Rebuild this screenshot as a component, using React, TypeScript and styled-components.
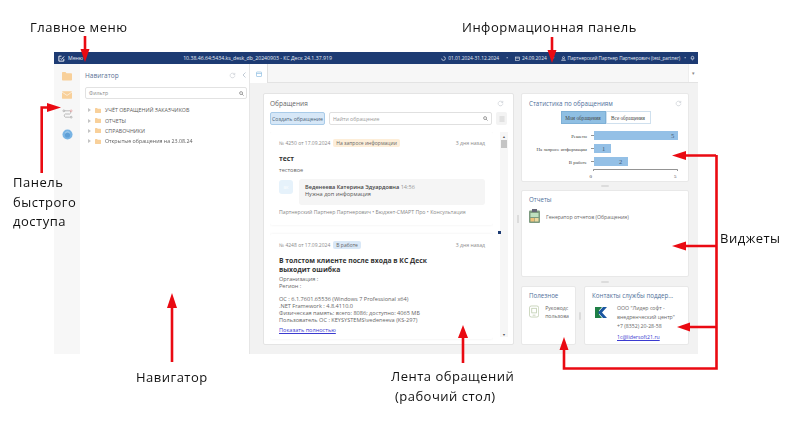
import React from "react";
import styled, { createGlobalStyle } from "styled-components";

const Global = createGlobalStyle`
  html, body { margin: 0; padding: 0; background: #fff; }
  body { font-family: "Open Sans", "Noto Sans", sans-serif; }
  #root { width: 789px; height: 422px; overflow: hidden; position: relative; }
`;

const Page = styled.div`
  width: 789px;
  height: 422px;
  padding: 52px 91px 0 54px;
  box-sizing: border-box;
  background: #fff;
`;
const AppWindow = styled.div`
  width: 644px;
  height: 302px;
  display: flex;
  flex-direction: column;
  filter: blur(0.35px);
  font-size: 6px;
  color: #555;
`;
const TopBar = styled.header`
  height: 12px;
  background: #1d3b73;
  color: #e6ecf5;
  display: flex;
  align-items: center;
  padding: 0 3px 0 4px;
  font-size: 5.2px;
  flex: none;
`;
const MenuBtn = styled.div`
  display: flex;
  align-items: center;
  gap: 3px;
  width: 107px;
  flex: none;
`;
const TopTitle = styled.div`
  width: 185px;
  flex: none;
  text-align: center;
  white-space: nowrap;
`;
const TopInfo = styled.div`
  margin-left: auto;
  display: flex;
  align-items: center;
  white-space: nowrap;
  font-size: 4.85px;
`;
const InfoItem = styled.span<{ $fs?: number }>`
  display: inline-flex;
  align-items: center;
  gap: 2px;
  ${(p) => (p.$fs ? `font-size: ${p.$fs}px;` : "")}
`;
const Dot = styled.span<{ $m: number }>`
  margin: 0 ${(p) => p.$m}px;
  opacity: 0.8;
`;
const Body = styled.div`
  flex: 1;
  display: flex;
  min-height: 0;
`;
const Rail = styled.nav`
  width: 26px;
  background: #f7f7f7;
  display: flex;
  flex-direction: column;
  align-items: center;
  padding-top: 8px;
  gap: 10px;
  flex: none;
  box-sizing: border-box;
`;
const Navigator = styled.aside`
  width: 170px;
  background: #fff;
  border-right: 1px solid #e6e6e6;
  padding: 6px 2px 0 5px;
  box-sizing: border-box;
  flex: none;
`;
const NavHead = styled.div`
  display: flex;
  align-items: center;
  justify-content: space-between;
  height: 10px;
  color: #5a7295;
  font-size: 6.5px;
  padding-right: 1px;
`;
const HeadIcons = styled.div`
  display: flex;
  gap: 6px;
  align-items: center;
`;
const Filter = styled.div`
  margin-top: 7px;
  height: 12px;
  border: 1px solid #e2e2e2;
  border-radius: 2px;
  display: flex;
  align-items: center;
  justify-content: space-between;
  padding: 0 2px 0 3px;
  font-size: 5.2px;
  color: #888;
  box-sizing: border-box;
`;
const Tree = styled.ul`
  list-style: none;
  margin: 6px 0 0;
  padding: 0 0 0 3px;
`;
const TreeRow = styled.li`
  height: 10.4px;
  display: flex;
  align-items: center;
  gap: 4px;
  font-size: 5.3px;
  color: #5c5c5c;
  white-space: nowrap;
`;
const Caret = styled.span`
  width: 0;
  height: 0;
  border-left: 3px solid #c4c4c4;
  border-top: 2px solid transparent;
  border-bottom: 2px solid transparent;
`;
const Work = styled.main`
  flex: 1;
  display: flex;
  flex-direction: column;
  min-width: 0;
`;
const TabBar = styled.div`
  height: 19px;
  flex: none;
  background: #f7f7f7;
  border-bottom: 1px solid #e3e3e3;
  display: flex;
  justify-content: space-between;
  box-sizing: border-box;
`;
const Tab = styled.div`
  width: 17px;
  background: #fff;
  border-right: 1px solid #e0e0e0;
  display: flex;
  align-items: center;
  justify-content: center;
  height: 19px;
`;
const TabMenu = styled.div`
  width: 9px;
  background: #fff;
  border-left: 1px solid #eee;
  display: flex;
  align-items: center;
  justify-content: center;
  color: #888;
  font-size: 5px;
`;
const Desk = styled.div`
  flex: 1;
  background: #f2f2f2;
  display: flex;
  padding: 10px 9px 9px 13px;
  gap: 7px;
  min-height: 0;
`;
const FeedPanel = styled.section`
  width: 251px;
  flex: none;
  background: #fff;
  border: 1px solid #e4e4e4;
  border-radius: 2px;
  padding: 4px 5px 0 6px;
  box-sizing: border-box;
  display: flex;
  flex-direction: column;
  min-height: 0;
`;
const PanelHead = styled.div`
  display: flex;
  justify-content: space-between;
  align-items: center;
  height: 10px;
  font-size: 6.5px;
  color: #666;
  padding-right: 4px;
`;
const Toolbar = styled.div`
  display: flex;
  gap: 4px;
  margin-top: 4px;
  height: 13px;
  flex: none;
`;
const CreateBtn = styled.div`
  width: 55px;
  background: #d6e7f7;
  border: 1px solid #a9cbe8;
  border-radius: 2px;
  font-size: 5.2px;
  color: #4b5f75;
  display: flex;
  align-items: center;
  justify-content: center;
  box-sizing: border-box;
  white-space: nowrap;
`;
const SearchBox = styled.div`
  width: 163px;
  border: 1px solid #e0e0e0;
  border-radius: 2px;
  font-size: 5.2px;
  color: #999;
  display: flex;
  align-items: center;
  justify-content: space-between;
  padding: 0 3px;
  box-sizing: border-box;
`;
const ListBtn = styled.div`
  width: 11px;
  background: #f3f3f3;
  border-radius: 2px;
  display: flex;
  align-items: center;
  justify-content: center;
`;
const FeedWrap = styled.div`
  flex: 1;
  display: flex;
  gap: 7px;
  min-height: 0;
  margin-top: 7px;
`;
const FeedList = styled.div`
  width: 223px;
  display: flex;
  flex-direction: column;
  gap: 9px;
  overflow: hidden;
  flex: none;
  padding-bottom: 10px;
`;
const Ticket = styled.article<{ $h: number }>`
  height: ${(p) => p.$h}px;
  background: #fff;
  box-shadow: 0 0 3px rgba(0, 0, 0, 0.07);
  border-radius: 2px;
  padding: 7px 7px 0 9px;
  box-sizing: border-box;
  flex: none;
`;
const TicketMeta = styled.div`
  display: flex;
  align-items: center;
  font-size: 5px;
  color: #8a8a8a;
  height: 8px;
  gap: 3px;
  padding-right: 1px;
`;
const Status = styled.span<{ $bg: string }>`
  background: ${(p) => p.$bg};
  color: #666;
  border-radius: 2px;
  padding: 1px 3px;
  white-space: nowrap;
`;
const Ago = styled.span`
  margin-left: auto;
  font-size: 5.2px;
`;
const TicketTitle = styled.h3<{ $mb: number }>`
  margin: 7px 0 ${(p) => p.$mb}px;
  font-size: 6.8px;
  line-height: 9px;
  font-weight: 700;
  color: #333;
  width: 150px;
`;
const TicketText = styled.div`
  font-size: 5.6px;
  color: #666;
  line-height: 7px;
`;
const Comment = styled.div`
  display: flex;
  gap: 6px;
  margin-top: 5px;
`;
const Avatar = styled.div`
  width: 14px;
  height: 14px;
  margin-top: 1px;
  border-radius: 3px;
  background: #e6f2fb;
  color: #fff;
  font-size: 4px;
  display: flex;
  align-items: center;
  justify-content: center;
  flex: none;
`;
const Bubble = styled.div`
  width: 186px;
  height: 26px;
  background: #f5f5f5;
  border-radius: 3px;
  padding: 5px 6px;
  box-sizing: border-box;
  font-size: 5.6px;
  line-height: 7px;
  color: #555;
`;
const Author = styled.b`
  color: #444;
  font-weight: 600;
`;
const Time = styled.span`
  color: #999;
`;
const TicketFoot = styled.div`
  margin-top: 3px;
  font-size: 5.2px;
  color: #888;
  white-space: nowrap;
`;
const ShowAll = styled.a`
  display: block;
  margin-top: 2px;
  font-size: 5.6px;
  color: #3b3bd0;
  text-decoration: underline;
`;
const Gap = styled.div`
  height: 6px;
`;
const Scrollbar = styled.div`
  width: 8px;
  background: #f6f6f6;
  display: flex;
  flex-direction: column;
  align-items: center;
  font-size: 3.5px;
  color: #555;
  justify-content: space-between;
  padding: 2px 0 0;
  flex: none;
  height: 205px;
  box-sizing: border-box;
`;
const Thumb = styled.div`
  width: 6px;
  height: 8px;
  background: #c4c4c4;
  margin-top: 1px;
`;
const ThumbCol = styled.div`
  display: flex;
  flex-direction: column;
  align-items: center;
`;
const Side = styled.div`
  width: 168px;
  flex: none;
  display: flex;
  flex-direction: column;
  position: relative;
`;
const Card = styled.section<{ $h?: number; $w?: number; $pt?: number }>`
  background: #fff;
  border: 1px solid #e8e8e8;
  border-radius: 2px;
  box-sizing: border-box;
  padding: ${(p) => p.$pt ?? 4}px 6px 0 7px;
  ${(p) => (p.$h ? `height: ${p.$h}px; flex: none;` : "")}
  ${(p) => (p.$w ? `width: ${p.$w}px; flex: none;` : "")}
  overflow: hidden;
`;
const CardTitle = styled.div`
  height: 10px;
  display: flex;
  align-items: center;
  justify-content: space-between;
  font-size: 6.2px;
  color: #4f6f9a;
  white-space: nowrap;
`;
const Toggle = styled.div`
  display: flex;
  justify-content: center;
  margin-top: 3px;
  height: 13px;
  font-family: "Liberation Serif", serif;
  font-size: 5.2px;
`;
const ToggleItem = styled.div<{ $on?: boolean }>`
  width: 45px;
  display: flex;
  align-items: center;
  justify-content: center;
  background: ${(p) => (p.$on ? "#8fbfe3" : "#fff")};
  border: 1px solid ${(p) => (p.$on ? "#7eb0d6" : "#cfe0ee")};
  color: #444;
  box-sizing: border-box;
  white-space: nowrap;
`;
const ChartSvg = styled.svg`
  display: block;
  margin: 5px 0 0 -7px;
`;
const Grip = styled.div<{ $h: number }>`
  height: ${(p) => p.$h}px;
  display: flex;
  align-items: center;
  justify-content: center;
  flex: none;
  &::after {
    content: "";
    width: 8px;
    height: 2px;
    background: #dcdcdc;
    border-radius: 1px;
  }
`;
const VGrip = styled.div`
  width: 8px;
  flex: none;
  display: flex;
  align-items: center;
  justify-content: center;
  &::after {
    content: "";
    width: 2px;
    height: 8px;
    background: #dcdcdc;
    border-radius: 1px;
  }
`;
const BottomRow = styled.div`
  display: flex;
  height: 59px;
  flex: none;
`;
const ItemRow = styled.div`
  display: flex;
  gap: 6px;
  margin-top: 5px;
  align-items: flex-start;
  font-size: 5.2px;
  color: #666;
  line-height: 8px;
`;
const ReportLabel = styled.span`
  margin-top: 4px;
  white-space: nowrap;
`;
const Guide = styled.span`
  margin-top: -1px;
  white-space: nowrap;
`;
const LogoRow = styled.div`
  display: flex;
  gap: 10px;
  margin-top: 4px;
  padding-left: 3px;
`;
const Contact = styled.div`
  font-size: 5.2px;
  line-height: 8.5px;
  color: #666;
  white-space: nowrap;
`;
const Phone = styled.div`
  margin-top: 1px;
`;
const Mail = styled.a`
  color: #3b3bd0;
  text-decoration: underline;
  display: block;
  margin-top: 2px;
`;
const SideSplit = styled.div`
  position: absolute;
  left: -4px;
  top: 122px;
  width: 2px;
  height: 8px;
  background: #dcdcdc;
`;
const Marker = styled.div`
  position: absolute;
  left: 498px;
  top: 231px;
  width: 3px;
  height: 3px;
  background: #1d3b73;
`;
const Callout = styled.div<{ $x: number; $y: number }>`
  position: absolute;
  left: ${(p) => p.$x}px;
  top: ${(p) => p.$y}px;
  font-family: "Open Sans", sans-serif;
  font-size: 13px;
  line-height: 19.5px;
  color: #111;
  white-space: pre;
  letter-spacing: 0.5px;
`;
const Arrows = styled.svg`
  position: absolute;
  left: 0;
  top: 0;
  pointer-events: none;
`;

const Folder = ({ s = 10, c = "#f8d09a" }: { s?: number; c?: string }) => (
  <svg width={s} height={s * 0.85} viewBox="0 0 12 10">
    <path d="M0 1.2C0 .5.5 0 1.2 0h3l1.2 1.4h5.4c.7 0 1.2.5 1.2 1.2v6.200c0 .7-.5 1.2-1.2 1.2H1.2C.5 10 0 9.5 0 8.8z" fill={c} />
  </svg>
);
const Reload = ({ c = "#ccd0d6" }: { c?: string }) => (
  <svg width="7" height="7" viewBox="0 0 24 24" fill="none" stroke={c} strokeWidth="2.4">
    <path d="M20 12a8 8 0 1 1-2.5-5.800L20 8.500M20 3v5.500h-5.500" />
  </svg>
);
const Search = () => (
  <svg width="5" height="5" viewBox="0 0 24 24" fill="none" stroke="#777" strokeWidth="3.4">
    <circle cx="10" cy="10" r="7" />
    <path d="M15 15l7 7" />
  </svg>
);

const Chart = () => (
  <ChartSvg width="168" height="50" viewBox="0 0 168 50" fontFamily="Liberation Serif, serif" fontSize="4.9" fill="#444">
    <rect x="72" y="2" width="84" height="9" fill="#94c0e6" />
    <rect x="72" y="15" width="17" height="9" fill="#94c0e6" />
    <rect x="72" y="28" width="34" height="9" fill="#94c0e6" />
    <g stroke="#666" strokeWidth="0.7" fill="none">
      <path d="M69 6.500h3M69 19.500h3M69 32.500h3" />
      <path d="M71.500 42v-1.500h84V42" />
    </g>
    <text x="65" y="8.500" textAnchor="end">Решено</text>
    <text x="65" y="21.500" textAnchor="end">На запросе информации</text>
    <text x="65" y="34.500" textAnchor="end">В работе</text>
    <text x="149" y="9" fontSize="6.5" fill="#3f5a75">5</text>
    <text x="80" y="22" fontSize="6.5" fill="#3f5a75">1</text>
    <text x="97" y="35" fontSize="6.5" fill="#3f5a75">2</text>
    <text x="67.500" y="48.500">0</text>
    <text x="152" y="48.500">5</text>
  </ChartSvg>
);

const Red = "#ea0a12";
const ArrowLayer = () => (
  <Arrows width="789" height="422" viewBox="0 0 789 422">
    <g fill="none" stroke={Red} strokeWidth="2.6">
      <path d="M85 36v16" />
      <path d="M552 37v16" />
      <path d="M41.700 173V107.500h8" />
      <path d="M172 305v57" />
      <path d="M463 335v28" />
      <path d="M716 155.500h-34M716 246h-34M716 327h-30M716.500 155v213.500H564V347" />
    </g>
    <g fill={Red}>
      <path d="M85 62l-4.500-13h9z" />
      <path d="M552 63l-4.500-13h9z" />
      <path d="M61 107.500l-14-4.500v9z" />
      <path d="M172 293l-5 15h10z" />
      <path d="M463 325l-5 13h10z" />
      <path d="M672 155.500l14-4.500v9z" />
      <path d="M672 246l14-4.500v9z" />
      <path d="M677 327l13-4.500v9z" />
      <path d="M564 337l-4.500 13h9z" />
    </g>
  </Arrows>
);

export default function App() {
  return (
    <>
      <Global />
      <Page>
        <AppWindow>
          <TopBar>
            <MenuBtn>
              <svg width="7" height="7" viewBox="0 0 24 24" fill="none" stroke="#fff" strokeWidth="3">
                <path d="M20 13v8H3V4h9M9 12l3 3 9-10" />
              </svg>
              Меню
            </MenuBtn>
            <TopTitle>10.38.46.64:5434.ks_desk_db_20240903 - КС Деск 24.1.37.919</TopTitle>
            <TopInfo>
              <InfoItem>
                <svg width="5" height="5" viewBox="0 0 24 24" fill="none" stroke="#fff" strokeWidth="3"><path d="M12 3a9 9 0 1 1-9 9" /></svg>
                01.01.2024-31.12.2024
              </InfoItem>
              <Dot $m={7}>•</Dot>
              <InfoItem>
                <svg width="5" height="5" viewBox="0 0 24 24" fill="none" stroke="#fff" strokeWidth="2.5"><rect x="3" y="5" width="18" height="16" /><path d="M3 10h18" /></svg>
                24.09.2024
              </InfoItem>
              <Dot $m={6}>•</Dot>
              <InfoItem $fs={4.65}>
                <svg width="5" height="5" viewBox="0 0 24 24" fill="none" stroke="#fff" strokeWidth="2.5"><circle cx="12" cy="8" r="5" /><path d="M3 22c0-5 4-8 9-8s9 3 9 8z" /></svg>
                Партнерский Партнер Партнерович (test_partner)
              </InfoItem>
              <Dot $m={4}>•</Dot>
              <svg width="5" height="6" viewBox="0 0 24 24" fill="none" stroke="#fff" strokeWidth="3"><path d="M6 17V10a6 6 0 0 1 12 0v7zM10 21h4" /></svg>
            </TopInfo>
          </TopBar>
          <Body>
            <Rail>
              <Folder />
              <svg width="10" height="8" viewBox="0 0 12 9"><rect width="12" height="9" rx="1" fill="#f8d09a" /><path d="M0 1l6 4 6-4" fill="none" stroke="#fff" strokeWidth=".7" /></svg>
              <svg width="11" height="10" viewBox="0 0 12 11" fill="none" stroke="#9a9a9a" strokeWidth=".7">
                <path d="M3 2h5.500a2 2 0 0 1 0 3.500h-5a2 2 0 0 0 0 3.500h5" />
                <circle cx="10" cy="2" r="1" stroke="#e09090" />
                <circle cx="2" cy="2" r="1" />
                <circle cx="10" cy="9" r="1" />
              </svg>
              <svg width="11" height="11" viewBox="0 0 12 12"><circle cx="6" cy="6" r="5.500" fill="#79b4e4" /><circle cx="6" cy="6.500" r="2.800" fill="#5f9fd6" /><path d="M3.500 4.500a3 3 0 0 1 5 0" stroke="#d9ecfa" strokeWidth=".6" fill="none" /></svg>
            </Rail>
            <Navigator>
              <NavHead>
                Навигатор
                <HeadIcons>
                  <Reload />
                  <svg width="4" height="6" viewBox="0 0 4 6" fill="none" stroke="#b4bfcc" strokeWidth=".8"><path d="M3.500.5L1 3l2.500 2.500" /></svg>
                </HeadIcons>
              </NavHead>
              <Filter>
                Фильтр
                <Search />
              </Filter>
              <Tree>
                {["УЧЁТ ОБРАЩЕНИЙ ЗАКАЗЧИКОВ", "ОТЧЕТЫ", "СПРАВОЧНИКИ", "Открытые обращения на 23.08.24"].map((t) => (
                  <TreeRow key={t}>
                    <Caret />
                    <Folder s={6} />
                    {t}
                  </TreeRow>
                ))}
              </Tree>
            </Navigator>
            <Work>
              <TabBar>
                <Tab>
                  <svg width="6" height="6" viewBox="0 0 12 12" fill="none" stroke="#7fb5de" strokeWidth="1.2"><rect x="1" y="2" width="10" height="9" rx="1" /><path d="M1 5h10" /></svg>
                </Tab>
                <TabMenu>▾</TabMenu>
              </TabBar>
              <Desk>
                <FeedPanel>
                  <PanelHead>
                    Обращения
                    <Reload />
                  </PanelHead>
                  <Toolbar>
                    <CreateBtn>Создать обращение</CreateBtn>
                    <SearchBox>
                      Найти обращение
                      <Search />
                    </SearchBox>
                    <ListBtn>
                      <svg width="6" height="6" viewBox="0 0 12 12" stroke="#aaa" strokeWidth="1"><path d="M1 2h10M1 6h10M1 10h10" /></svg>
                    </ListBtn>
                  </Toolbar>
                  <FeedWrap>
                    <FeedList>
                      <Ticket $h={93}>
                        <TicketMeta>
                          № 4250 от 17.09.2024
                          <Status $bg="#fdeed9">На запросе информации</Status>
                          <Ago>3 дня назад</Ago>
                        </TicketMeta>
                        <TicketTitle $mb={4}>тест</TicketTitle>
                        <TicketText>тестовое</TicketText>
                        <Comment>
                          <Avatar>ВК</Avatar>
                          <Bubble>
                            <Author>Веденеева Катерина Эдуардовна</Author> <Time>14:56</Time>
                            <br />
                            Нужна доп информация
                          </Bubble>
                        </Comment>
                        <TicketFoot>Партнерский Партнер Партнерович • Бюджет-СМАРТ Про • Консультация</TicketFoot>
                      </Ticket>
                      <Ticket $h={105}>
                        <TicketMeta>
                          № 4248 от 17.09.2024
                          <Status $bg="#d9e8f7">В работе</Status>
                          <Ago>3 дня назад</Ago>
                        </TicketMeta>
                        <TicketTitle $mb={2}>В толстом клиенте после входа в КС Деск выходит ошибка</TicketTitle>
                        <TicketText>
                          Организация :
                          <br />
                          Регион :
                          <Gap />
                          ОС : 6.1.7601.65536 (Windows 7 Professional x64)
                          <br />
                          .NET Framework : 4.8.4110.0
                          <br />
                          Физическая память: всего: 8086; доступно: 4065 МБ
                          <br />
                          Пользователь ОС : KEYSYSTEMS\vedeneeva (KS-297)
                        </TicketText>
                        <ShowAll>Показать полностью</ShowAll>
                      </Ticket>
                    </FeedList>
                    <Scrollbar>
                      <ThumbCol>
                        ▲
                        <Thumb />
                      </ThumbCol>
                      ▼
                    </Scrollbar>
                  </FeedWrap>
                </FeedPanel>
                <Side>
                  <SideSplit />
                  <Card $h={89}>
                    <CardTitle>
                      Статистика по обращениям
                      <Reload />
                    </CardTitle>
                    <Toggle>
                      <ToggleItem $on>Мои обращения</ToggleItem>
                      <ToggleItem>Все обращения</ToggleItem>
                    </Toggle>
                    <Chart />
                  </Card>
                  <Grip $h={8} />
                  <Card $h={87} $pt={3}>
                    <CardTitle>Отчеты</CardTitle>
                    <ItemRow>
                      <svg width="11" height="14" viewBox="0 0 11 14">
                        <rect x="0" y="1.500" width="11" height="12.500" rx="1" fill="#7d9a7f" />
                        <rect x="3" y="0" width="5" height="3" fill="#667" />
                        <rect x="1.500" y="4" width="8" height="4" fill="#bfe0c0" />
                        <rect x="1.500" y="9" width="4" height="3.500" fill="#f0c27a" />
                        <rect x="6" y="9" width="3.500" height="3.500" fill="#e9d9a0" />
                      </svg>
                      <ReportLabel>Генератор отчетов (Обращения)</ReportLabel>
                    </ItemRow>
                  </Card>
                  <Grip $h={9} />
                  <BottomRow>
                    <Card $w={55} $pt={3}>
                      <CardTitle>Полезное</CardTitle>
                      <ItemRow>
                        <svg width="11" height="13" viewBox="0 0 11 13" fill="none" stroke="#b9c9a8" strokeWidth=".8">
                          <rect x=".5" y=".5" width="10" height="12" rx="2" />
                          <rect x="3" y="3" width="5" height="5" />
                          <path d="M4 10.500h3" />
                        </svg>
                        <Guide>
                          Руководс
                          <br />
                          пользова
                        </Guide>
                      </ItemRow>
                    </Card>
                    <VGrip />
                    <Card $w={105} $pt={3}>
                      <CardTitle>Контакты службы поддер...</CardTitle>
                      <LogoRow>
                        <svg width="12" height="11" viewBox="0 0 12 11" style={{ marginTop: 3 }}>
                          <path d="M0 0h4v11H0z" fill="#1f7f46" />
                          <path d="M3 5.500L8 0h4L7 5.500l5 5.500H8z" fill="#1a56a0" />
                          <path d="M4 0h3L4 3.500z M4 11h3L4 7.500z" fill="#1f7f46" />
                        </svg>
                        <Contact>
                          ООО "Лидер софт -
                          <br />
                          внедренческий центр"
                          <Phone>+7 (8352) 20-28-58</Phone>
                          <Mail>1c@lidersoft21.ru</Mail>
                        </Contact>
                      </LogoRow>
                    </Card>
                  </BottomRow>
                </Side>
              </Desk>
            </Work>
          </Body>
        </AppWindow>
      </Page>
      <Marker />
      <ArrowLayer />
      <Callout $x={30} $y={18}>Главное меню</Callout>
      <Callout $x={462} $y={18}>Информационная панель</Callout>
      <Callout $x={13} $y={173}>{"Панель\nбыстрого\nдоступа"}</Callout>
      <Callout $x={136} $y={368}>Навигатор</Callout>
      <Callout $x={391} $y={367}>{"Лента обращений\n (рабочий стол)"}</Callout>
      <Callout $x={720} $y={229}>Виджеты</Callout>
    </>
  );
}
